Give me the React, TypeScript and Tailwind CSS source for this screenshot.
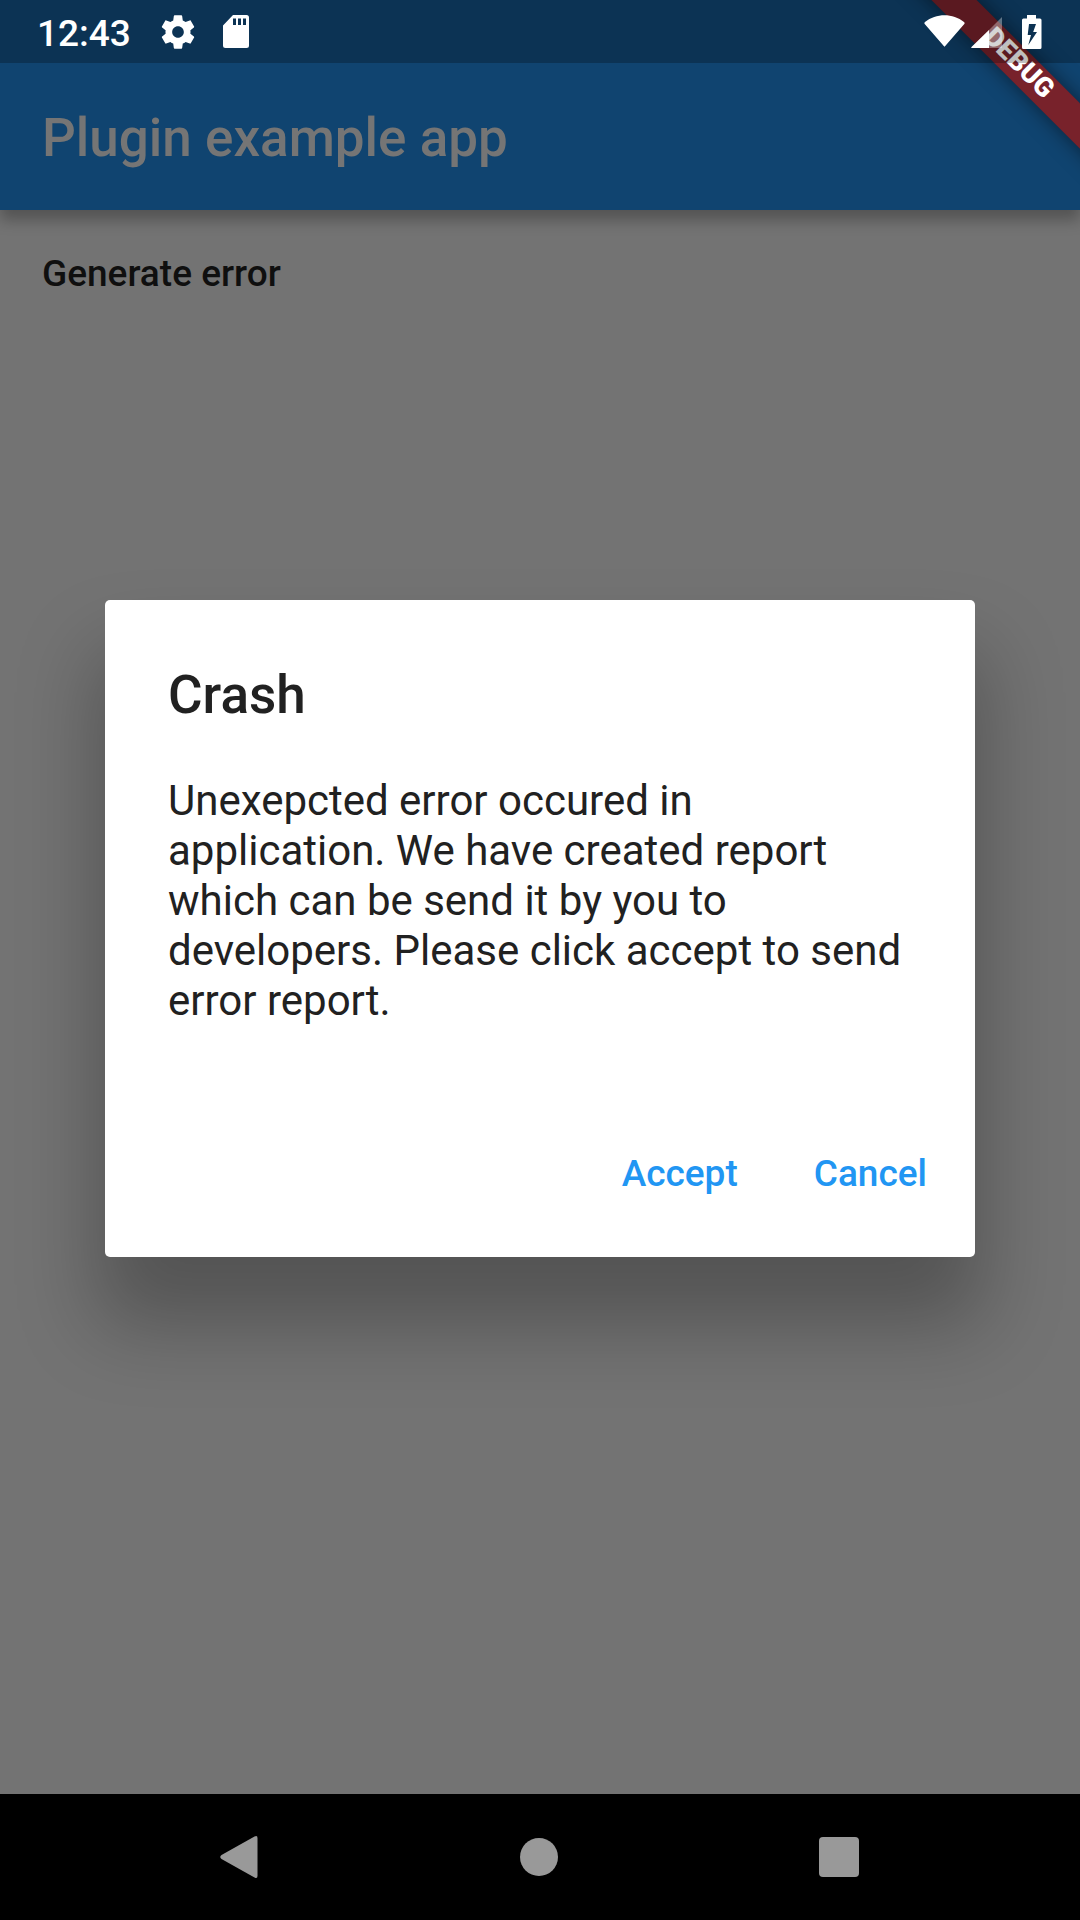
import React from "react";

function StatusBar() {
  return (
    <div className="relative z-20 flex h-[63px] items-center justify-between bg-black/25 pl-[37px] pr-[38px] text-white">
      <div className="flex items-center gap-[25px]">
        <time className="w-[96px] pt-[4px] text-[37px] font-medium leading-[44px]">12:43</time>
        <svg viewBox="0 0 24 24" className="h-[40px] w-[40px]" fill="currentColor" role="img" aria-label="Settings">
          <path d="M19.43 12.98c.04-.32.07-.64.07-.98s-.03-.66-.07-.98l2.11-1.65c.19-.15.24-.42.12-.64l-2-3.46c-.12-.22-.39-.3-.61-.22l-2.49 1c-.52-.4-1.08-.73-1.69-.98l-.38-2.65C14.46 2.18 14.25 2 14 2h-4c-.25 0-.46.18-.49.42l-.38 2.65c-.61.25-1.17.59-1.69.98l-2.49-1c-.23-.09-.49 0-.61.22l-2 3.46c-.13.22-.07.49.12.64l2.11 1.65c-.04.32-.07.65-.07.98s.03.66.07.98l-2.11 1.65c-.19.15-.24.42-.12.64l2 3.46c.12.22.39.3.61.22l2.49-1c.52.4 1.08.73 1.69.98l.38 2.65c.03.24.24.42.49.42h4c.25 0 .46-.18.49-.42l.38-2.65c.61-.25 1.17-.59 1.69-.98l2.49 1c.23.09.49 0 .61-.22l2-3.46c.12-.22.07-.49-.12-.64l-2.11-1.65zM12 15.5c-1.93 0-3.5-1.57-3.5-3.5s1.57-3.5 3.5-3.5 3.5 1.57 3.5 3.5-1.57 3.5-3.5 3.5z" />
        </svg>
        <svg viewBox="0 0 26 33" className="h-[33px] w-[26px]" fill="currentColor" role="img" aria-label="SD card">
          <path fillRule="evenodd" d="M10 0H23.500a2.500 2.500 0 0 1 2.500 2.500V30.500a2.500 2.500 0 0 1-2.500 2.500H2.500a2.500 2.500 0 0 1-2.500-2.500V10.500ZM10 3.500V10h3V3.500ZM15 3.500V10h3V3.500ZM20 3.500V10h3V3.500Z" />
        </svg>
      </div>
      <svg viewBox="0 0 118 34" className="h-[34px] w-[118px]" fill="currentColor" role="img" aria-label="Wi-Fi, mobile signal and charging battery">
        <path d="M1 7C12 -2 29 -2 40 7Q41 8 40.300 9L21 31.300Q20.500 32 20 31.300L0.700 9Q0 8 1 7Z" />
        <path d="M78 2V33H47Z" opacity="0.35" />
        <path d="M65 15V33H48Q46.500 33 47.500 32Z" />
        <path
          fillRule="evenodd"
          d="M103 0h9v3.500h4a1.500 1.500 0 0 1 1.500 1.500V32.500a1.500 1.500 0 0 1-1.500 1.500H99.500a1.500 1.500 0 0 1-1.500-1.500V5a1.500 1.500 0 0 1 1.500-1.500h3.500ZM105 9L103.700 20H107L104.300 30L113 17H109.200L112 9Z"
        />
      </svg>
    </div>
  );
}

function DebugBanner() {
  return (
    <div className="pointer-events-none absolute right-0 top-0 z-10 h-[200px] w-[200px] overflow-hidden">
      <div className="absolute left-[-12px] top-[48px] flex h-[32px] w-[300px] rotate-45 items-center justify-center bg-[#78222b] pb-[3px] text-[27px] font-black leading-[29px] text-white shadow-[0_0_20px_rgba(0,0,0,0.5)]">
        DEBUG
      </div>
    </div>
  );
}

function CrashDialog() {
  return (
    <div className="absolute inset-0 flex items-center justify-center px-[105px] pb-[126px] pt-[63px]">
      <section
        role="dialog"
        aria-modal="true"
        aria-labelledby="crash-title"
        className="w-full rounded-[5px] bg-white text-[#212121] shadow-[0_60px_80px_8px_rgba(0,0,0,0.27)]"
      >
        <div className="px-[63px] pt-[63px]">
          <h1 id="crash-title" className="text-[53px] font-medium leading-[64px]">Crash</h1>
          <p className="pt-[49px] text-[42px] leading-[50px]">
            Unexepcted error occured in application. We have created report which can be send it by you to developers. Please click accept to send error report.
          </p>
        </div>
        <div className="flex justify-end gap-[20px] px-[20px] pb-[29px] pt-[94px] text-[37px] font-medium leading-[44px] text-[#2196f3]">
          <button type="button" className="px-[28px] py-[32px]">Accept</button>
          <button type="button" className="px-[28px] py-[32px]">Cancel</button>
        </div>
      </section>
    </div>
  );
}

function NavigationBar() {
  return (
    <nav className="relative grid h-[126px] grid-cols-3 items-center justify-items-center bg-black pl-[89px] pr-[91px] text-[#999999]">
      <button type="button" aria-label="Back">
        <svg viewBox="0 0 38 42" className="h-[42px] w-[38px]" fill="currentColor">
          <path d="M34.500 0.500Q37.500 -1 37.500 2V40Q37.500 43 34.500 41.500L1.500 23Q-1 21 1.500 19Z" />
        </svg>
      </button>
      <button type="button" aria-label="Home" className="h-[38px] w-[38px] rounded-full bg-[#999999]" />
      <button type="button" aria-label="Recent apps" className="h-[40px] w-[40px] rounded-[4px] bg-[#999999]" />
    </nav>
  );
}

export default function App() {
  return (
    <div className="relative flex min-h-screen flex-col overflow-hidden bg-[#737373] font-['Roboto',sans-serif]">
      <header className="bg-[#104470] shadow-[0_10px_14px_0_rgba(0,0,0,0.28)]">
        <StatusBar />
        <h2 className="px-[42px] pb-[40px] pt-[44px] text-[53px] font-medium leading-[63px] text-[#757575]">Plugin example app</h2>
      </header>
      <main className="flex-1 px-[42px] py-[42px]">
        <button type="button" className="text-[37px] font-medium leading-[44px] text-[#0f0f0f]">Generate error</button>
      </main>
      <DebugBanner />
      <CrashDialog />
      <NavigationBar />
    </div>
  );
}
